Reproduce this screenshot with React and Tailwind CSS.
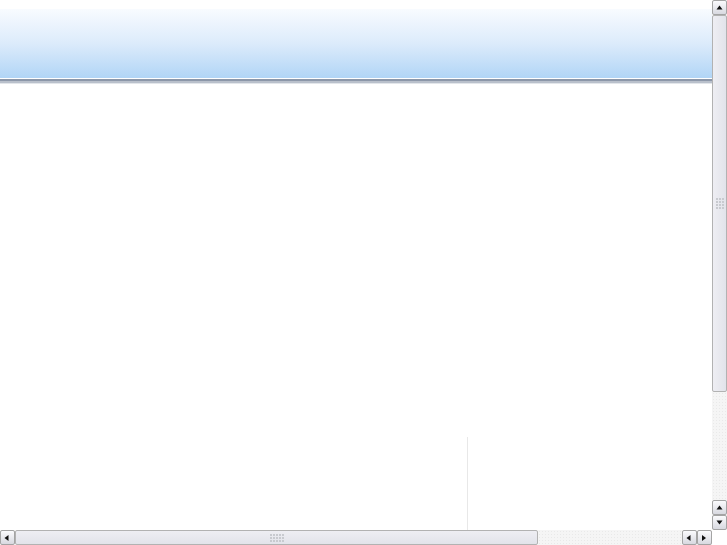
import React from "react";

const Arrow = ({ dir }) => {
  const pts = {
    up: "1.5,5.5 4.5,1.5 7.5,5.5",
    down: "1.5,1.5 4.5,5.5 7.5,1.5",
    left: "5.5,1 1.5,4 5.5,7",
    right: "2,1 6,4 2,7",
  }[dir];
  return (
    <div className="w-[15px] h-[15px] flex items-center justify-center rounded-[2px] border border-[#a4a4a4] bg-gradient-to-b from-[#fbfbfd] to-[#d8d9e0]">
      <svg width="9" height="8" viewBox="0 0 9 8">
        <polygon points={pts} fill="#111" />
      </svg>
    </div>
  );
};

const Grip = ({ vertical }) => (
  <div className={vertical ? "grid grid-cols-3 gap-[1px]" : "grid grid-cols-5 gap-[1px]"}>
    {Array.from({ length: vertical ? 12 : 15 }).map((_, i) => (
      <div key={i} className="w-[2px] h-[2px] bg-[#c8cacf]" />
    ))}
  </div>
);

const Track = () => (
  <div className="flex-1 bg-[#f5f5f5] bg-[radial-gradient(#e9e9e9_0.7px,transparent_0.9px)] bg-[length:3px_3px]" />
);

export default function App() {
  return (
    <div className="w-[727px] h-[545px] grid grid-cols-[712px_15px] grid-rows-[530px_15px] bg-white overflow-hidden">
      {/* content */}
      <div className="flex flex-col">
        <div className="h-[9px]" />
        <div className="h-[69px] bg-gradient-to-b from-[#f8fbff] via-[#dcebfb] to-[#b1d5f6]" />
        <div className="h-[1px] bg-white" />
        <div className="h-[2px] bg-[#8c97a9]" />
        <div className="h-[2px] bg-[#b9c0cb]" />
        <div className="h-[1px] bg-[#e3e6ea]" />
        <div className="flex-1" />
        <div className="h-[93px] flex">
          <div className="w-[468px] border-r border-[#e8e8e8]" />
        </div>
      </div>

      {/* vertical scrollbar */}
      <div className="flex flex-col bg-[#f5f5f5]">
        <Arrow dir="up" />
        <div className="h-[377px] border border-[#b2b2b2] rounded-[2px] bg-gradient-to-r from-[#eeeef3] to-[#e2e3ea] flex items-center justify-center">
          <Grip vertical />
        </div>
        <Track />
        <Arrow dir="up" />
        <Arrow dir="down" />
      </div>

      {/* horizontal scrollbar */}
      <div className="flex bg-[#f5f5f5]">
        <Arrow dir="left" />
        <div className="w-[523px] border border-[#b2b2b2] rounded-[2px] bg-gradient-to-b from-[#eeeef3] to-[#e2e3ea] flex items-center justify-center">
          <Grip />
        </div>
        <Track />
        <Arrow dir="left" />
        <Arrow dir="right" />
      </div>

      <div className="bg-white" />
    </div>
  );
}
